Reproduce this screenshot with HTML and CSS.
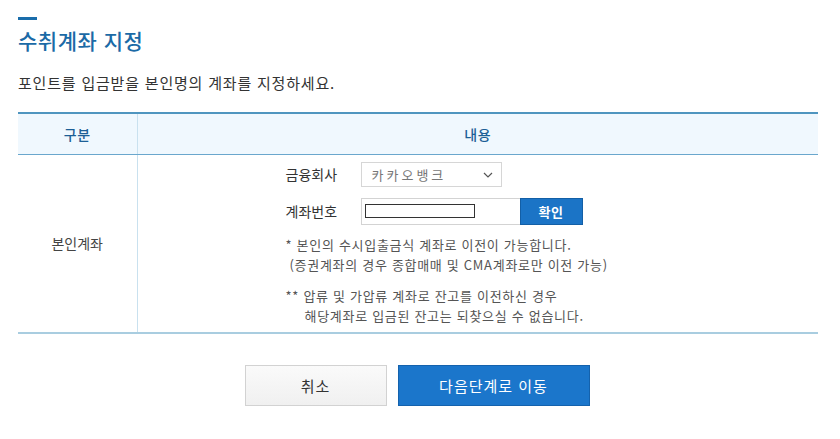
FILE: index.html
```html
<!DOCTYPE html>
<html lang="ko">
<head>
<meta charset="utf-8">
<title>수취계좌 지정</title>
<link rel="stylesheet" href="styles.css">
</head>
<body>
<div class="page">
  <div class="title-bar"></div>
  <h1 class="title">수취계좌 지정</h1>
  <p class="desc">포인트를 입금받을 본인명의 계좌를 지정하세요.</p>

  <table class="tbl">
    <thead>
      <tr>
        <th class="col-a">구분</th>
        <th class="col-b">내용</th>
      </tr>
    </thead>
    <tbody>
      <tr>
        <td class="cell-a">본인계좌</td>
        <td class="cell-b">
          <div class="form-row">
            <span class="label">금융회사</span>
            <div class="select">
              <span class="select-text">카카오뱅크</span>
              <svg class="chev" width="10" height="6" viewBox="0 0 10 6"><path d="M1 1 L5 5 L9 1" fill="none" stroke="#555" stroke-width="1.2"/></svg>
            </div>
          </div>
          <div class="form-row row2">
            <span class="label">계좌번호</span>
            <div class="acct">
              <input class="acct-input" type="text">
            </div>
            <button class="btn-confirm">확인</button>
          </div>
          <div class="notes">
            <p class="note">* 본인의 수시입출금식 계좌로 이전이 가능합니다.</p>
            <p class="note indent1">(증권계좌의 경우 종합매매 및 CMA계좌로만 이전 가능)</p>
            <p class="note gap">** 압류 및 가압류 계좌로 잔고를 이전하신 경우</p>
            <p class="note indent2">해당계좌로 입금된 잔고는 되찾으실 수 없습니다.</p>
          </div>
        </td>
      </tr>
    </tbody>
  </table>

  <div class="actions">
    <button class="btn btn-cancel">취소</button>
    <button class="btn btn-next">다음단계로 이동</button>
  </div>
</div>
</body>
</html>
```

FILE: styles.css
```css
* { box-sizing: border-box; }
html, body { margin: 0; padding: 0; background: #fff; }
body {
  font-family: "Noto Sans CJK KR", "Noto Sans", "Liberation Sans", sans-serif;
  color: #333;
}
.page {
  width: 800px;
  margin-left: 18px;
  padding-top: 17px;
}
.title-bar {
  width: 19px;
  height: 3px;
  background: #1a6dab;
}
.title {
  margin: 6px 0 0;
  font-size: 21px;
  line-height: 28px;
  font-weight: 500;
  color: #1b6aa6;
  letter-spacing: 0.5px;
}
.desc {
  margin: 19px 0 0;
  font-size: 15px;
  line-height: 20px;
  color: #333;
  letter-spacing: 0.8px;
}
.tbl {
  margin-top: 19px;
  width: 800px;
  border-collapse: collapse;
  border-top: 2px solid #4f95bf;
  border-bottom: 2px solid #a9cde0;
}
.tbl th {
  height: 41px;
  background: #f0f8fe;
  font-size: 14px;
  font-weight: 500;
  color: #1d5f96;
  border-bottom: 1px solid #6aa7cd;
  padding: 0;
  letter-spacing: 0.5px;
}
.col-a { width: 119px; border-right: 1px solid #c9e1ef; }
.cell-a {
  border-right: 1px solid #c9e1ef;
  text-align: center;
  font-size: 14px;
  color: #444;
  vertical-align: middle;
}
.cell-b {
  padding: 7px 0 6px 148px;
  font-size: 14px;
}
.form-row {
  display: flex;
  align-items: center;
  height: 25px;
}
.row2 { margin-top: 11px; height: 27px; }
.label {
  width: 75px;
  font-size: 14px;
  color: #333;
}
.select {
  width: 141px;
  height: 25px;
  border: 1px solid #d6d6d6;
  display: flex;
  align-items: center;
  justify-content: space-between;
  padding: 0 8px 0 10px;
  font-size: 13px;
  color: #777;
  letter-spacing: 3px;
}
.chev { margin-top: 1px; }
.acct {
  width: 159px;
  height: 27px;
  border: 1px solid #d3d3d3;
  border-right: none;
  display: flex;
  align-items: center;
  padding-left: 3px;
}
.acct-input {
  width: 110px;
  height: 14px;
  border: 1px solid #333;
  padding: 0;
  margin: 0;
  background: #fff;
}
.btn-confirm {
  width: 63px;
  height: 27px;
  background: #1b74c6;
  border: 1px solid #135fa6;
  color: #fff;
  font-family: inherit;
  font-size: 13px;
  font-weight: 700;
  padding: 0;
  letter-spacing: 0.5px;
}
.notes { margin-top: 10px; }
.note {
  margin: 0;
  font-size: 13px;
  line-height: 20px;
  color: #555;
  letter-spacing: 0.7px;
}
.indent1 { padding-left: 4px; }
.gap { margin-top: 11px; }
.indent2 { padding-left: 19px; }
.actions {
  margin-top: 31px;
  display: flex;
  justify-content: center;
  gap: 11px;
  padding-right: 2px;
}
.btn {
  height: 41px;
  font-family: inherit;
  font-size: 15px;
  padding: 0;
  letter-spacing: 1px;
}
.btn-cancel {
  width: 142px;
  background: linear-gradient(#fafafa, #f0f0f0);
  border: 1px solid #d2d2d2;
  color: #333;
}
.btn-next {
  width: 192px;
  background: #1b76cb;
  border: 1px solid #1462ad;
  color: #fff;
}
```
